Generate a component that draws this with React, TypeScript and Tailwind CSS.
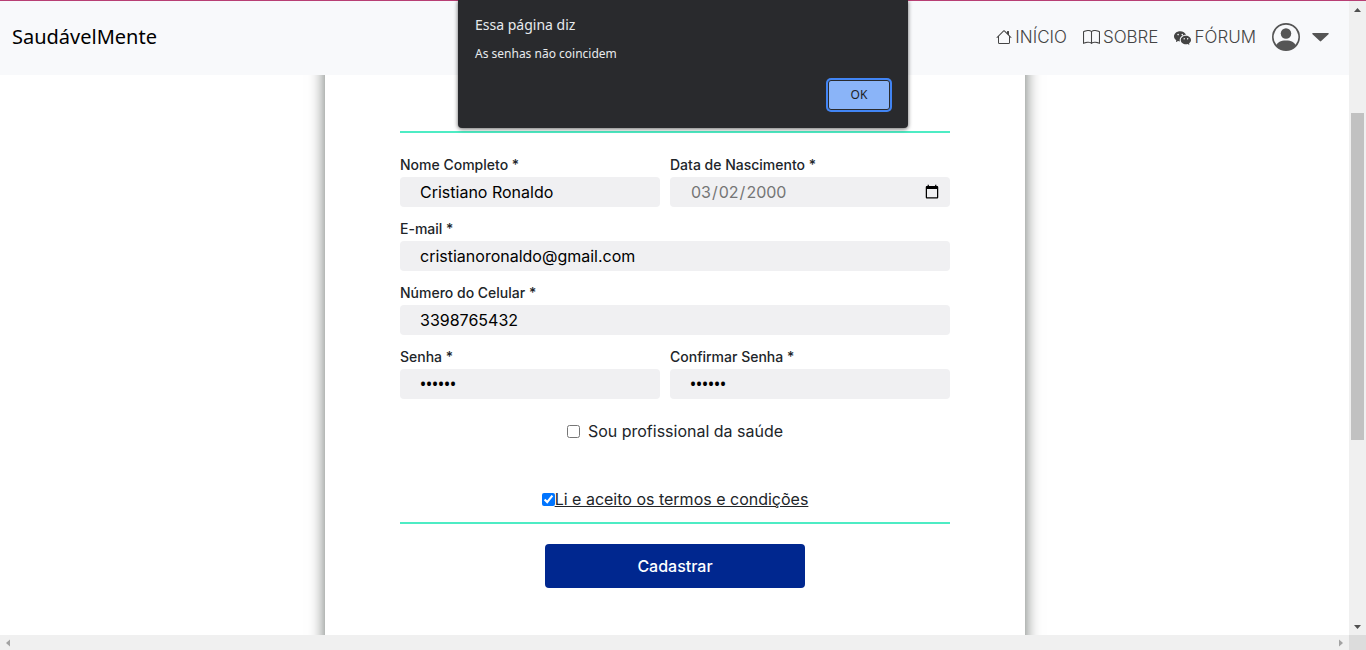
import type { InputHTMLAttributes, ReactNode } from "react";
import { BsBook, BsHouse, BsPersonCircle, BsWechat } from "react-icons/bs";

const sans = "font-['Inter','Open_Sans',sans-serif]";

type FieldProps = InputHTMLAttributes<HTMLInputElement> & {
  id: string;
  label: string;
  wide?: boolean;
};

function Field({ id, label, wide, className = "text-black", ...rest }: FieldProps) {
  return (
    <div className={wide ? "col-span-2" : ""}>
      <label htmlFor={id} className="block text-sm leading-6 font-medium text-[#212529]">
        {label}
      </label>
      <input
        id={id}
        className={`block h-[30px] w-full rounded bg-[#f0f0f2] pr-2 pl-5 text-base outline-none ${className}`}
        {...rest}
      />
    </div>
  );
}

function NavLink({ icon, children }: { icon: ReactNode; children: string }) {
  return (
    <a href="#" className="flex items-center gap-[3px]">
      {icon}
      {children}
    </a>
  );
}

function Header() {
  return (
    <header className="flex h-[74px] shrink-0 items-center justify-between bg-[#f8f9fb] pr-5 pb-0.5 pl-3">
      <a href="#" className="font-['Noto_Sans',sans-serif] text-xl text-black">
        SaudávelMente
      </a>
      <nav className="flex items-center gap-4 text-[17px] leading-7 font-light text-[#444]">
        <NavLink icon={<BsHouse size={16} />}>INÍCIO</NavLink>
        <NavLink icon={<BsBook size={17} />}>SOBRE</NavLink>
        <NavLink icon={<BsWechat size={17} />}>FÓRUM</NavLink>
        <button type="button" aria-label="Perfil" className="flex items-center gap-3 text-[#555]">
          <BsPersonCircle size={28} />
          <svg width="17" height="9" viewBox="0 0 17 9" fill="currentColor">
            <path d="M1 0h15c.7 0 1 .7.500 1.200L9.200 8.100c-.4.400-1 .4-1.400 0L.5 1.200C0 .7.300 0 1 0z" />
          </svg>
        </button>
      </nav>
    </header>
  );
}

function SignupForm() {
  return (
    <form className="-mt-5 -mb-5 w-[700px] shrink-0 bg-white px-[75px] pt-[76px] pb-12 shadow-[0_0_15px_rgba(0,12,6,0.6)]">
      <div className="grid grid-cols-[260fr_280fr] gap-2.5 border-t-2 border-[#4eecc4] pt-5">
        <Field id="nome" label="Nome Completo *" defaultValue="Cristiano Ronaldo" />
        <Field
          id="nascimento"
          label="Data de Nascimento *"
          type="date"
          defaultValue="2000-03-02"
          className="text-[#757575]"
        />
        <Field id="email" label="E-mail *" type="email" defaultValue="cristianoronaldo@gmail.com" wide />
        <Field id="celular" label="Número do Celular *" type="tel" defaultValue="3398765432" wide />
        <Field
          id="senha"
          label="Senha *"
          type="password"
          defaultValue="abc123"
          className="font-['Open_Sans',sans-serif] font-semibold text-black"
        />
        <Field
          id="confirmar"
          label="Confirmar Senha *"
          type="password"
          defaultValue="abc124"
          className="font-['Open_Sans',sans-serif] font-semibold text-black"
        />
      </div>
      <label className="mt-5 flex h-6 items-center justify-center gap-2 text-[#212529]">
        <input type="checkbox" className="size-[13px]" />
        Sou profissional da saúde
      </label>
      <div className="mt-11 flex h-6 items-center justify-center text-[#212529]">
        <input id="termos" type="checkbox" defaultChecked className="size-[13px] accent-[#0075ff]" />
        <label htmlFor="termos" className="underline">
          Li e aceito os termos e condições
        </label>
      </div>
      <div className="mt-[11px] flex justify-center border-t-2 border-[#4eecc4] pt-5">
        <button type="button" className="h-11 w-[260px] rounded bg-[#00278f] font-medium text-white">
          Cadastrar
        </button>
      </div>
    </form>
  );
}

function AlertDialog() {
  return (
    <div
      role="alertdialog"
      aria-labelledby="alert-title"
      aria-describedby="alert-text"
      className="absolute top-0 left-1/2 flex w-[450px] -translate-x-1/2 flex-col rounded-b bg-[#292a2d] pt-3.5 pr-[18px] pb-[18px] pl-[17px] font-['Noto_Sans',sans-serif] text-[#e8eaed] shadow-[0_1px_4px_rgba(0,0,0,0.6)]"
    >
      <h2 id="alert-title" className="text-sm leading-[22px]">
        Essa página diz
      </h2>
      <p id="alert-text" className="mt-2 text-xs leading-5">
        As senhas não coincidem
      </p>
      <button
        type="button"
        className="mt-4 h-[30px] w-[62px] self-end rounded-[3px] border border-[#292a2d] bg-[#8ab4f8] text-xs text-[#202124] ring-2 ring-[#4285f4]"
      >
        OK
      </button>
    </div>
  );
}

function VerticalScrollbar() {
  return (
    <div aria-hidden="true" className="flex w-[17px] flex-col items-center bg-[#f0f0f0]">
      <svg width="17" height="17" viewBox="0 0 17 17" fill="#505050">
        <path d="M8.500 7L12 11H5z" />
      </svg>
      <div className="grow-[95]" />
      <div className="w-[13px] grow-[326] bg-[#c1c1c1]" />
      <div className="grow-[178]" />
      <svg width="17" height="17" viewBox="0 0 17 17" fill="#505050">
        <path d="M8.500 11L5 7h7z" />
      </svg>
    </div>
  );
}

function HorizontalScrollbar() {
  return (
    <div aria-hidden="true" className="flex h-[15px] shrink-0 bg-[#f0f0f0]">
      <div className="flex grow items-center justify-between">
        <svg width="17" height="15" viewBox="0 0 17 15" fill="#a3a3a3">
          <path d="M6 8l4-3.500v7z" />
        </svg>
        <svg width="17" height="15" viewBox="0 0 17 15" fill="#a3a3a3">
          <path d="M11 8L7 4.500v7z" />
        </svg>
      </div>
      <div className="w-[17px] bg-[#dcdcdc]" />
    </div>
  );
}

export default function App() {
  return (
    <div className={`relative flex h-screen flex-col overflow-hidden bg-white ${sans}`}>
      <div className="h-px shrink-0 bg-[#b83f74]" />
      <div className="flex min-h-0 grow">
        <div className="flex min-w-0 grow flex-col">
          <Header />
          <main className="flex min-h-0 grow justify-center overflow-hidden pl-px">
            <SignupForm />
          </main>
        </div>
        <VerticalScrollbar />
      </div>
      <HorizontalScrollbar />
      <AlertDialog />
    </div>
  );
}
